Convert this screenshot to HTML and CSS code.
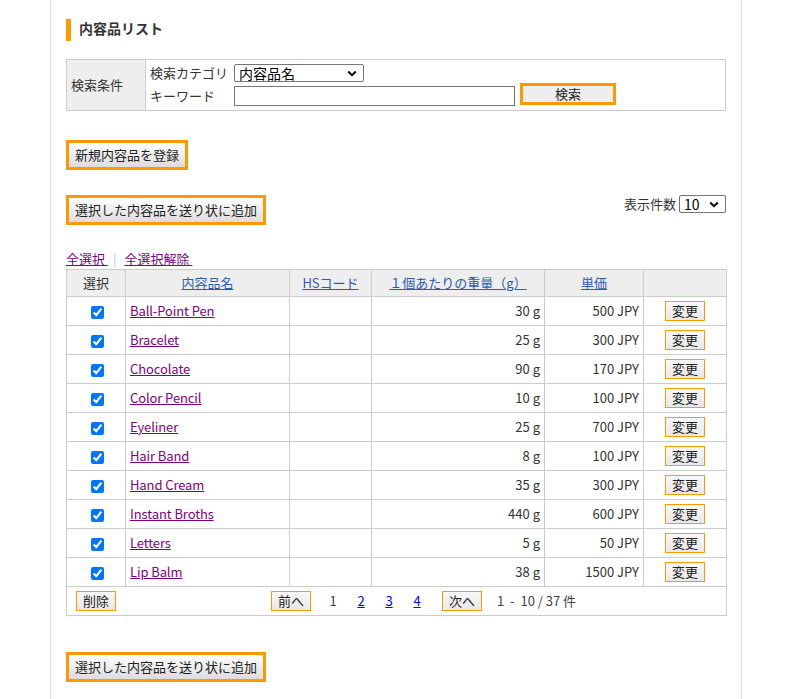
FILE: index.html
```html
<!DOCTYPE html>
<html lang="ja">
<head>
<meta charset="utf-8">
<title>内容品リスト</title>
<link rel="stylesheet" href="styles.css">
</head>
<body>
<div class="page">
  <h2 class="title">内容品リスト</h2>

  <table class="search">
    <tr>
      <th class="search-label">検索条件</th>
      <td class="search-body">
        <div class="search-grid">
          <span class="field-label">検索カテゴリ</span>
          <span class="sel-wrap cat-wrap">
            <select class="sel"><option>内容品名</option></select>
            <svg class="chev" width="10" height="7" viewBox="0 0 10 7"><path d="M1.2 1.5 L5 5.2 L8.8 1.5" fill="none" stroke="#000" stroke-width="2"/></svg>
          </span>
          <span></span>
          <span class="field-label">キーワード</span>
          <input type="text" class="kw">
          <button class="btn-search">検索</button>
        </div>
      </td>
    </tr>
  </table>

  <div class="row-new">
    <button class="btn-orange">新規内容品を登録</button>
  </div>

  <div class="row-add">
    <button class="btn-orange">選択した内容品を送り状に追加</button>
    <div class="per-page">
      <span>表示件数</span>
      <span class="sel-wrap count-wrap">
        <select class="sel"><option>10</option></select>
        <svg class="chev" width="10" height="7" viewBox="0 0 10 7"><path d="M1.2 1.5 L5 5.2 L8.8 1.5" fill="none" stroke="#000" stroke-width="2"/></svg>
      </span>
    </div>
  </div>

  <div class="select-links">
    <a href="#" class="visited">全選択&nbsp;</a><span class="sep">|</span><a href="#" class="visited">全選択解除&nbsp;</a>
  </div>

  <table class="list">
    <colgroup>
      <col class="c1"><col class="c2"><col class="c3"><col class="c4"><col class="c5"><col class="c6">
    </colgroup>
    <thead>
      <tr>
        <th>選択</th>
        <th><a href="#" class="head-link">内容品名</a></th>
        <th><a href="#" class="head-link">HSコード</a></th>
        <th><a href="#" class="head-link">１個あたりの重量（g）</a></th>
        <th><a href="#" class="head-link">単価</a></th>
        <th></th>
      </tr>
    </thead>
    <tbody>
      <tr><td class="chk"><input type="checkbox" checked></td><td class="name"><a href="#" class="visited">Ball-Point Pen</a></td><td></td><td class="num">30 g</td><td class="num">500 JPY</td><td class="act"><button class="btn-small">変更</button></td></tr>
      <tr><td class="chk"><input type="checkbox" checked></td><td class="name"><a href="#" class="visited">Bracelet</a></td><td></td><td class="num">25 g</td><td class="num">300 JPY</td><td class="act"><button class="btn-small">変更</button></td></tr>
      <tr><td class="chk"><input type="checkbox" checked></td><td class="name"><a href="#" class="visited">Chocolate</a></td><td></td><td class="num">90 g</td><td class="num">170 JPY</td><td class="act"><button class="btn-small">変更</button></td></tr>
      <tr><td class="chk"><input type="checkbox" checked></td><td class="name"><a href="#" class="visited">Color Pencil</a></td><td></td><td class="num">10 g</td><td class="num">100 JPY</td><td class="act"><button class="btn-small">変更</button></td></tr>
      <tr><td class="chk"><input type="checkbox" checked></td><td class="name"><a href="#" class="visited">Eyeliner</a></td><td></td><td class="num">25 g</td><td class="num">700 JPY</td><td class="act"><button class="btn-small">変更</button></td></tr>
      <tr><td class="chk"><input type="checkbox" checked></td><td class="name"><a href="#" class="visited">Hair Band</a></td><td></td><td class="num">8 g</td><td class="num">100 JPY</td><td class="act"><button class="btn-small">変更</button></td></tr>
      <tr><td class="chk"><input type="checkbox" checked></td><td class="name"><a href="#" class="visited">Hand Cream</a></td><td></td><td class="num">35 g</td><td class="num">300 JPY</td><td class="act"><button class="btn-small">変更</button></td></tr>
      <tr><td class="chk"><input type="checkbox" checked></td><td class="name"><a href="#" class="visited">Instant Broths</a></td><td></td><td class="num">440 g</td><td class="num">600 JPY</td><td class="act"><button class="btn-small">変更</button></td></tr>
      <tr><td class="chk"><input type="checkbox" checked></td><td class="name"><a href="#" class="visited">Letters</a></td><td></td><td class="num">5 g</td><td class="num">50 JPY</td><td class="act"><button class="btn-small">変更</button></td></tr>
      <tr><td class="chk"><input type="checkbox" checked></td><td class="name"><a href="#" class="visited">Lip Balm</a></td><td></td><td class="num">38 g</td><td class="num">1500 JPY</td><td class="act"><button class="btn-small">変更</button></td></tr>
    </tbody>
    <tfoot>
      <tr>
        <td colspan="6" class="foot">
          <div class="foot-inner">
            <button class="btn-small">削除</button>
            <div class="pager">
              <button class="btn-small">前へ</button>
              <span class="page-item current">1</span>
              <span class="page-item"><a href="#" class="page-link">2</a></span>
              <span class="page-item"><a href="#" class="page-link">3</a></span>
              <span class="page-item"><a href="#" class="page-link">4</a></span>
              <button class="btn-small next">次へ</button>
              <span class="range">1 &nbsp;-&nbsp; 10 / 37 件</span>
            </div>
          </div>
        </td>
      </tr>
    </tfoot>
  </table>

  <div class="row-bottom">
    <button class="btn-orange">選択した内容品を送り状に追加</button>
  </div>
</div>
</body>
</html>
```

FILE: styles.css
```css
* { box-sizing: border-box; }
html, body { margin: 0; padding: 0; background: #fff; }
body {
  font-family: "Noto Sans CJK JP", "Noto Sans", sans-serif;
  font-size: 13px;
  line-height: 18px;
  color: #333;
}
.page {
  margin-left: 50px;
  width: 692px;
  min-height: 699px;
  border-left: 1px solid #ddd;
  border-right: 1px solid #ddd;
  padding: 19px 15px 20px 15px;
}
.title {
  margin: 0;
  height: 22px;
  line-height: 18px;
  padding-bottom: 4px;
  border-left: 5px solid #f90;
  padding-left: 8px;
  font-size: 14px;
  font-weight: bold;
  color: #333;
}

/* search */
.search {
  margin-top: 18px;
  width: 660px;
  border-collapse: collapse;
  border: 1px solid #ccc;
}
.search-label {
  width: 79px;
  background: #eee;
  border-right: 1px solid #ccc;
  text-align: left;
  font-weight: normal;
  padding: 0 0 0 4px;
  vertical-align: middle;
}
.search-body { padding: 4px; }
.search-grid {
  display: grid;
  grid-template-columns: 84px 281px auto;
  grid-template-rows: 18px 20px;
  row-gap: 4px;
  align-items: center;
}

/* selects */
.sel-wrap {
  position: relative;
  display: inline-block;
  height: 18px;
}
.cat-wrap { width: 130px; }
.count-wrap { width: 47px; }
.sel {
  -webkit-appearance: none;
  appearance: none;
  display: block;
  width: 100%;
  height: 18px;
  margin: 0;
  padding: 0 16px 0 4px;
  border: 1px solid #767676;
  border-radius: 2px;
  background: #fff;
  font-family: "Noto Sans CJK JP", sans-serif;
  font-size: 14px;
  line-height: 16px;
  color: #000;
}
.chev {
  position: absolute;
  right: 7px;
  top: 6px;
  pointer-events: none;
}

.kw {
  width: 281px;
  height: 20px;
  border: 1px solid #767676;
  padding: 0 2px;
  font-family: inherit;
}
.btn-search {
  margin-left: 5px;
  width: 96px;
  height: 22px;
  border: 3px solid #f90;
  background: #eee;
  font-family: inherit;
  font-size: 13px;
  line-height: 14px;
  color: #222;
  padding: 0;
  align-self: end;
  margin-bottom: 1px;
}

/* orange buttons */
.btn-orange {
  height: 30px;
  border: 3px solid #f90;
  background: linear-gradient(#ffffff, #dcdcdc);
  padding: 0 6px;
  font-family: inherit;
  font-size: 13px;
  line-height: 22px;
  color: #222;
}
.row-new { margin-top: 29px; }
.row-add {
  margin-top: 25px;
  display: flex;
  justify-content: space-between;
  align-items: flex-start;
}
.per-page {
  display: flex;
  align-items: center;
  gap: 3px;
  height: 18px;
}

.select-links {
  margin-top: 25px;
  height: 19px;
  line-height: 18px;
}
a.visited { color: #800080; text-decoration: underline; }
.sep { color: #ccc; margin: 0 8px 0 5px; }

/* list */
.list {
  width: 660px;
  border-collapse: collapse;
  border: 1px solid #ccc;
  table-layout: fixed;
}
.c1 { width: 59px; }
.c2 { width: 164px; }
.c3 { width: 82px; }
.c4 { width: 173px; }
.c5 { width: 99px; }
.c6 { width: 83px; }
.list th, .list td {
  border: 1px solid #ccc;
  padding: 0 4px;
}
.list thead th {
  height: 27px;
  background: #eee;
  font-weight: normal;
  text-align: center;
}
.head-link { color: #2a5db0; text-decoration: underline; }
.list tbody td { height: 29px; }
.chk { text-align: center; }
.chk input {
  margin: 0 0 0 2px;
  width: 13px;
  height: 13px;
  vertical-align: middle;
}
.name { text-align: left; letter-spacing: -0.1px; }
.num { text-align: right; }
.act { text-align: center; }
.btn-small {
  height: 20px;
  border: 1px solid #f90;
  background: linear-gradient(#f8f8f8, #e8e8e8);
  padding: 0 6px;
  font-family: inherit;
  font-size: 13px;
  line-height: 16px;
  color: #222;
}
.list td.foot { height: 29px; padding: 0 9px; }
.foot-inner { display: flex; align-items: center; }
.pager {
  margin-left: 155px;
  display: flex;
  align-items: center;
}
.page-item {
  display: inline-block;
  width: 28px;
  text-align: center;
}
.pager .btn-small:first-child { margin-right: 8px; }
.current { color: #535; }
.page-link { color: #00e; text-decoration: underline; }
.next { margin-left: 11px; }
.range { margin-left: 15px; color: #444; }

.row-bottom { margin-top: 36px; }
```
